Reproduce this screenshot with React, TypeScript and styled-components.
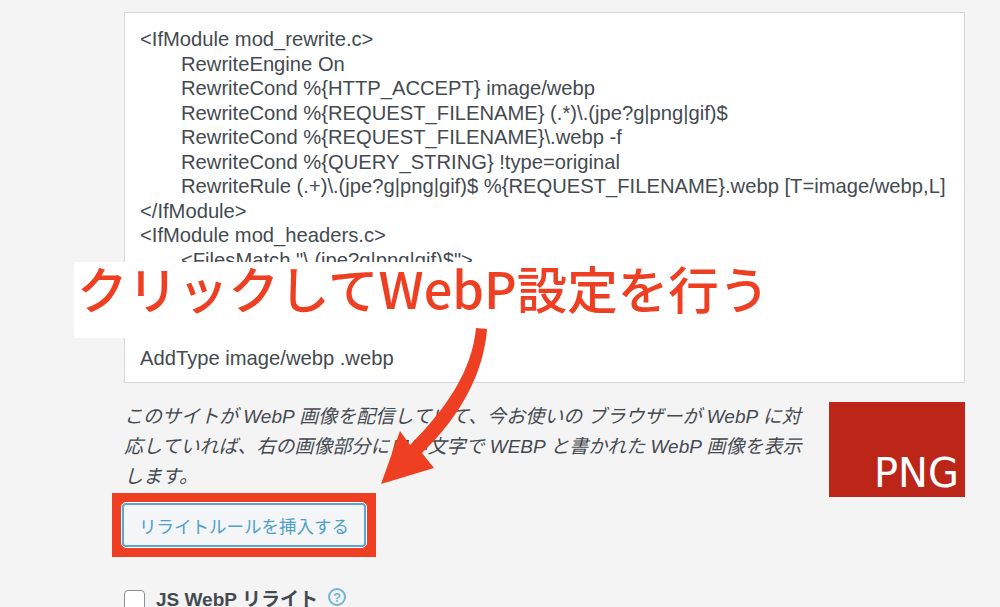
import styled, { createGlobalStyle } from "styled-components";

const RED = "#ee3f22";
const TEXT = "#444a50";

const CODE_TOP = [
  { text: "<IfModule mod_rewrite.c>" },
  { text: "RewriteEngine On", indent: true },
  { text: "RewriteCond %{HTTP_ACCEPT} image/webp", indent: true },
  { text: "RewriteCond %{REQUEST_FILENAME} (.*)\\.(jpe?g|png|gif)$", indent: true },
  { text: "RewriteCond %{REQUEST_FILENAME}\\.webp -f", indent: true },
  { text: "RewriteCond %{QUERY_STRING} !type=original", indent: true },
  { text: "RewriteRule (.+)\\.(jpe?g|png|gif)$ %{REQUEST_FILENAME}.webp [T=image/webp,L]", indent: true },
  { text: "</IfModule>" },
  { text: "<IfModule mod_headers.c>" },
  { text: '<FilesMatch "\\.(jpe?g|png|gif)$">', indent: true },
];

const App = () => {
  return (
    <Page>
      <GlobalStyle />
      <CodeBox>
        {CODE_TOP.map((line) => (
          <CodeLine key={line.text} $indent={line.indent}>
            {line.text}
          </CodeLine>
        ))}
        <CodeGap />
        <CodeLine>AddType image/webp .webp</CodeLine>
      </CodeBox>

      <DescRow>
        <Description>
          このサイトが WebP 画像を配信していて、今お使いの ブラウザーが WebP に対応していれば、右の画像部分に白い文字で WEBP と書かれた WebP 画像を表示します。
        </Description>
        <Preview>
          <PreviewLabel>PNG</PreviewLabel>
        </Preview>
      </DescRow>

      <Highlight>
        <InsertButton>リライトルールを挿入する</InsertButton>
      </Highlight>

      <OptionRow>
        <Checkbox />
        <OptionLabel>JS WebP リライト</OptionLabel>
        <HelpIcon>?</HelpIcon>
      </OptionRow>

      <Callout>クリックしてWebP設定を行う</Callout>
      <Arrow viewBox="0 0 110 160" aria-hidden="true">
        <path
          d="M96 1 L107 2 C104 44 82 88 42 126 L54 141 L1 157 L20 104 L30 118 C66 82 92 44 96 1 Z"
          fill={RED}
        />
      </Arrow>
    </Page>
  );
};

export default App;

const GlobalStyle = createGlobalStyle`
  html, body {
    margin: 0;
    height: 100%;
    overflow: hidden;
    background: #f4f4f4;
  }
`;

const Page = styled.div`
  position: relative;
  box-sizing: border-box;
  width: 1000px;
  height: 607px;
  padding: 12px 35px 0 124px;
  overflow: hidden;
  background: #f4f4f4;
  color: ${TEXT};
  font-family: "Liberation Sans", "Noto Sans CJK JP", sans-serif;
`;

const CodeBox = styled.div`
  box-sizing: border-box;
  height: 371px;
  padding: 14px 15px 0;
  background: #fff;
  border: 1px solid #d3d6da;
  font-size: 20.2px;
  line-height: 24.5px;
`;

const CodeLine = styled.div<{ $indent?: boolean }>`
  padding-left: ${(p) => (p.$indent ? "41px" : "0")};
  white-space: nowrap;
`;

const CodeGap = styled.div`
  height: 73.5px;
`;

const DescRow = styled.div`
  display: flex;
  justify-content: space-between;
  align-items: flex-start;
  margin-top: 19px;
`;

const Description = styled.p`
  width: 680px;
  margin: 0;
  font-size: 19px;
  font-style: italic;
  line-height: 30px;
`;

const Preview = styled.div`
  display: flex;
  justify-content: flex-end;
  align-items: flex-end;
  box-sizing: border-box;
  width: 136px;
  height: 95px;
  padding: 0 6px 2px 0;
  background: #bb2618;
`;

const PreviewLabel = styled.span`
  color: #fff;
  font-family: "DejaVu Sans", sans-serif;
  font-size: 40px;
  line-height: 44px;
`;

const Highlight = styled.div`
  box-sizing: border-box;
  width: 264px;
  height: 64px;
  margin: -4px 0 0 -12px;
  padding: 10px;
  background: ${RED};
`;

const InsertButton = styled.button`
  display: block;
  box-sizing: border-box;
  width: 100%;
  height: 100%;
  padding: 0;
  background: #f3f5f6;
  border: 2px solid #5ba7d1;
  border-radius: 4px;
  outline: 1px solid #fff;
  color: #4f9fcb;
  font-family: "Liberation Sans", "Noto Sans CJK JP", sans-serif;
  font-size: 17.5px;
`;

const OptionRow = styled.div`
  display: flex;
  align-items: flex-start;
  margin-top: 33px;
`;

const Checkbox = styled.span`
  box-sizing: border-box;
  width: 21px;
  height: 21px;
  background: #fff;
  border: 1.5px solid #8c8f94;
  border-radius: 4px;
`;

const OptionLabel = styled.span`
  margin-left: 11px;
  font-size: 19px;
  font-weight: 700;
  line-height: 20px;
`;

const HelpIcon = styled.span`
  display: flex;
  justify-content: center;
  align-items: center;
  box-sizing: border-box;
  width: 18px;
  height: 18px;
  margin: -2px 0 0 10px;
  border: 2px solid #6fb6d3;
  border-radius: 50%;
  color: #6fb6d3;
  font-size: 13px;
  font-weight: 700;
`;

const Callout = styled.div`
  position: absolute;
  top: 262px;
  left: 74px;
  box-sizing: border-box;
  width: 701px;
  height: 76px;
  padding-left: 3px;
  background: #fff;
  color: ${RED};
  font-family: "Noto Sans CJK JP", sans-serif;
  font-size: 50.5px;
  font-weight: 500;
  line-height: 50px;
  white-space: nowrap;
`;

const Arrow = styled.svg`
  position: absolute;
  top: 327px;
  left: 380px;
  width: 110px;
  height: 160px;
  overflow: visible;
`;
